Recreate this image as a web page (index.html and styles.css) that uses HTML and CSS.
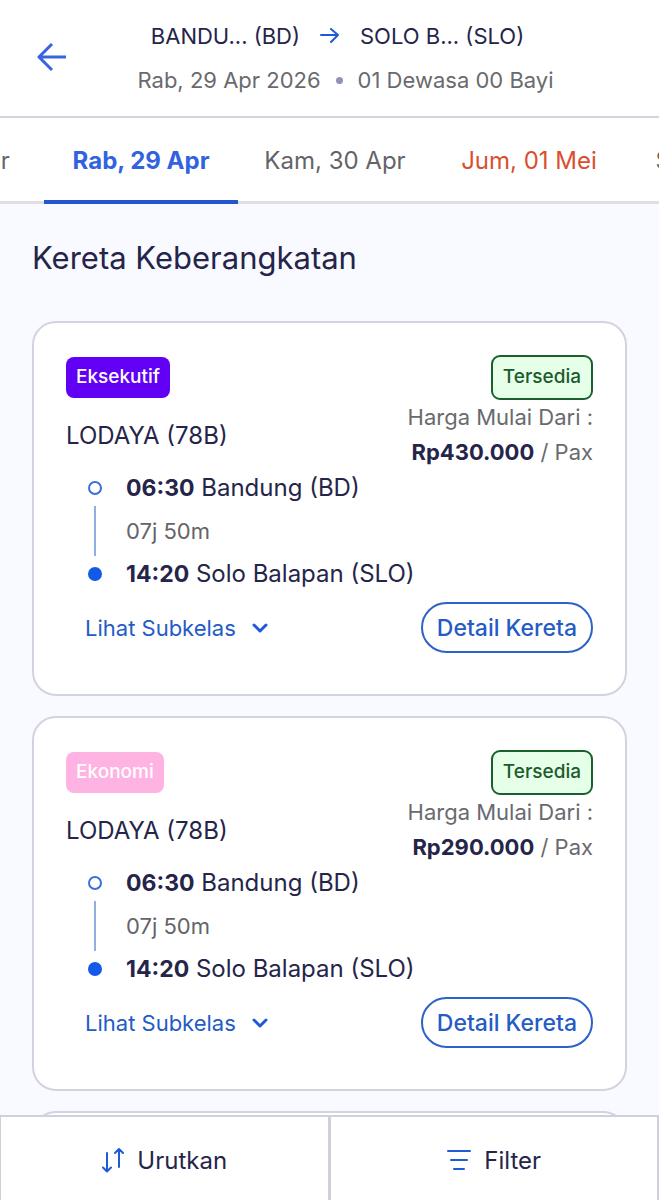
FILE: index.html
```html
<!DOCTYPE html>
<html lang="id">
<head>
<meta charset="utf-8">
<meta name="viewport" content="width=device-width, initial-scale=1">
<title>Kereta Keberangkatan</title>
<link rel="stylesheet" href="styles.css">
</head>
<body>
<div class="app">
  <header class="header">
    <button class="back" type="button" aria-label="Kembali">
      <svg width="30" height="30" viewBox="0 0 30 30"><path d="M30 14H3M16 1L3 14l13 13"/></svg>
    </button>
    <div class="trip">
      <div class="route">
        <span>BANDU... (BD)</span>
        <svg class="route-arrow" width="20" height="16" viewBox="0 0 20 16"><path d="M1 7h17M11 1l7 6-7 7"/></svg>
        <span>SOLO B... (SLO)</span>
      </div>
      <div class="meta">
        <span>Rab, 29 Apr 2026</span>
        <span class="meta-dot"></span>
        <span>01 Dewasa 00 Bayi</span>
      </div>
    </div>
  </header>

  <nav class="dates">
    <a class="date" href="#sel">Sel, 28 Apr</a>
    <a class="date date-active" href="#rab" aria-current="date">Rab, 29 Apr</a>
    <a class="date" href="#kam">Kam, 30 Apr</a>
    <a class="date date-holiday" href="#jum">Jum, 01 Mei</a>
    <a class="date" href="#sab">Sab, 02 Mei</a>
  </nav>

  <main class="content">
    <h1 class="title">Kereta Keberangkatan</h1>

    <article class="card">
      <div class="summary">
        <div class="train">
          <span class="badge badge-executive">Eksekutif</span>
          <h2 class="train-name">LODAYA (78B)</h2>
        </div>
        <div class="fare">
          <span class="status">Tersedia</span>
          <span>Harga Mulai Dari :</span>
          <span><strong class="price">Rp430.000</strong> / Pax</span>
        </div>
      </div>
      <div class="journey">
        <div class="track"><span class="stop"></span><span class="line"></span><span class="stop stop-end"></span></div>
        <div class="times">
          <span><strong class="time">06:30</strong> Bandung (BD)</span>
          <span class="duration">07j 50m</span>
          <span><strong class="time">14:20</strong> Solo Balapan (SLO)</span>
        </div>
      </div>
      <div class="actions">
        <button class="subclass" type="button">Lihat Subkelas
          <svg width="16" height="10" viewBox="0 0 16 10"><path d="M2 2l6 6 6-6"/></svg>
        </button>
        <button class="detail" type="button">Detail Kereta</button>
      </div>
    </article>

    <article class="card">
      <div class="summary">
        <div class="train">
          <span class="badge badge-economy">Ekonomi</span>
          <h2 class="train-name">LODAYA (78B)</h2>
        </div>
        <div class="fare">
          <span class="status">Tersedia</span>
          <span>Harga Mulai Dari :</span>
          <span><strong class="price">Rp290.000</strong> / Pax</span>
        </div>
      </div>
      <div class="journey">
        <div class="track"><span class="stop"></span><span class="line"></span><span class="stop stop-end"></span></div>
        <div class="times">
          <span><strong class="time">06:30</strong> Bandung (BD)</span>
          <span class="duration">07j 50m</span>
          <span><strong class="time">14:20</strong> Solo Balapan (SLO)</span>
        </div>
      </div>
      <div class="actions">
        <button class="subclass" type="button">Lihat Subkelas
          <svg width="16" height="10" viewBox="0 0 16 10"><path d="M2 2l6 6 6-6"/></svg>
        </button>
        <button class="detail" type="button">Detail Kereta</button>
      </div>
    </article>

    <article class="card"></article>
  </main>

  <footer class="toolbar">
    <button class="tool" type="button">
      <svg width="24" height="28" viewBox="0 0 24 28"><path d="M6 6v18M2 20.500L6 24.500l4-4M18 20V2M14 6L18 2l4 4"/></svg>
      Urutkan
    </button>
    <button class="tool" type="button">
      <svg width="26" height="22" viewBox="0 0 26 22"><path d="M2 1h22M5 10h16M8 19h10"/></svg>
      Filter
    </button>
  </footer>
</div>
</body>
</html>
```
FILE: styles.css
```css
* { box-sizing: border-box; }

body {
  margin: 0;
  background: #f9faff;
  color: #25254a;
  font-family: Inter, "Liberation Sans", sans-serif;
  font-size: 22px;
  line-height: 32px;
}

button {
  border: 0;
  padding: 0;
  background: none;
  color: inherit;
  font: inherit;
  cursor: pointer;
}

svg {
  flex: none;
  fill: none;
  stroke: #1f5bd8;
  stroke-width: 2;
  stroke-linecap: round;
  stroke-linejoin: round;
}

.app {
  display: flex;
  flex-direction: column;
  height: 100vh;
  overflow: hidden;
}

.header {
  flex: none;
  display: grid;
  grid-template-columns: 32px 1fr;
  align-items: center;
  padding: 14px 36px;
  border-bottom: 2px solid #d3d3de;
  background: #fff;
}

.back { display: flex; }
.back svg { stroke: #3565df; stroke-width: 3; stroke-linecap: butt; }

.trip {
  display: flex;
  flex-direction: column;
  align-items: center;
}

.route, .meta {
  display: flex;
  align-items: center;
  height: 44px;
  white-space: nowrap;
}

.route { gap: 20px; padding-right: 16px; }
.meta { gap: 15px; color: #6a6a6e; }

.meta-dot {
  width: 7px;
  height: 7px;
  border-radius: 50%;
  background: #8f93b8;
}

.dates {
  flex: none;
  display: flex;
  overflow: hidden;
  background: linear-gradient(#dfdfe1, #dfdfe1) bottom / 100% 3px no-repeat #fff;
}

.date {
  flex: none;
  width: 194px;
  padding: 27px 0 23px;
  border-bottom: 4px solid transparent;
  color: #646468;
  font-size: 24px;
  text-align: center;
  text-decoration: none;
}

.date:first-child { margin-left: -150px; }
.date-active { border-color: #2255d0; color: #3163df; font-weight: 700; }
.date-holiday { color: #d9502f; }

.content {
  flex: 1;
  min-height: 0;
  overflow-y: auto;
  scrollbar-width: none;
  padding: 34px 32px 0;
}

.title {
  margin: 0 0 43px;
  font-size: 31px;
  font-weight: 400;
  line-height: 40px;
}

.card {
  min-height: 100px;
  margin-bottom: 20px;
  padding: 32px 32px 41px;
  border: 2px solid #d3d3e0;
  border-radius: 24px;
  background: #fff;
}

.summary {
  display: flex;
  justify-content: space-between;
}

.train {
  display: flex;
  flex-direction: column;
  align-items: flex-start;
  gap: 22px;
  padding-top: 2px;
}

.badge {
  padding: 4px 10px 5px;
  border-radius: 8px;
  color: #fff;
  font-size: 19px;
  font-weight: 500;
}

.badge-executive { background: #6200f5; }
.badge-economy { background: #ffb3e2; }

.train-name {
  margin: 0;
  font-size: 24px;
  font-weight: 400;
}

.fare {
  display: flex;
  flex-direction: column;
  align-items: flex-end;
  gap: 3px;
  color: #6a6a6e;
}

.status {
  margin-bottom: -2px;
  padding: 4px 10px 5px;
  border: 2px solid #18602c;
  border-radius: 9px;
  background: #e6ffe9;
  color: #1c5b2b;
  font-size: 19px;
  font-weight: 500;
}

.price { color: #25254a; }

.journey {
  display: flex;
  gap: 24px;
  margin-top: 4px;
  padding-left: 22px;
  font-size: 24px;
}

.track {
  display: flex;
  flex-direction: column;
  align-items: center;
  justify-content: space-between;
  padding: 9px 0;
}

.stop {
  width: 14px;
  height: 14px;
  border: 2px solid #3d70d6;
  border-radius: 50%;
}

.stop-end { border-color: #1459e8; background: #1459e8; }
.line { width: 2px; height: 50px; background: #91aee2; }

.times {
  display: flex;
  flex-direction: column;
  gap: 11px;
}

.time { font-size: 23px; }
.duration { color: #646468; font-size: 22px; }

.actions {
  display: flex;
  align-items: center;
  justify-content: space-between;
  margin-top: 12px;
  padding-left: 19px;
  color: #245bc5;
}

.subclass {
  display: flex;
  align-items: center;
  gap: 16px;
}

.detail {
  padding: 8px 14px 7px;
  border: 2px solid #2c62c9;
  border-radius: 26px;
  font-size: 23px;
  font-weight: 500;
}

.subclass svg { stroke-width: 3; }

.toolbar {
  flex: none;
  display: grid;
  grid-template-columns: 1fr 1fr;
  border-top: 2px solid #d0d0dd;
  background: #fff;
}

.tool {
  display: flex;
  align-items: center;
  justify-content: center;
  gap: 12px;
  height: 83px;
  padding-top: 4px;
  border: solid #d0d0dd;
  border-width: 0 2px 0 1px;
  font-size: 24px;
}
```
